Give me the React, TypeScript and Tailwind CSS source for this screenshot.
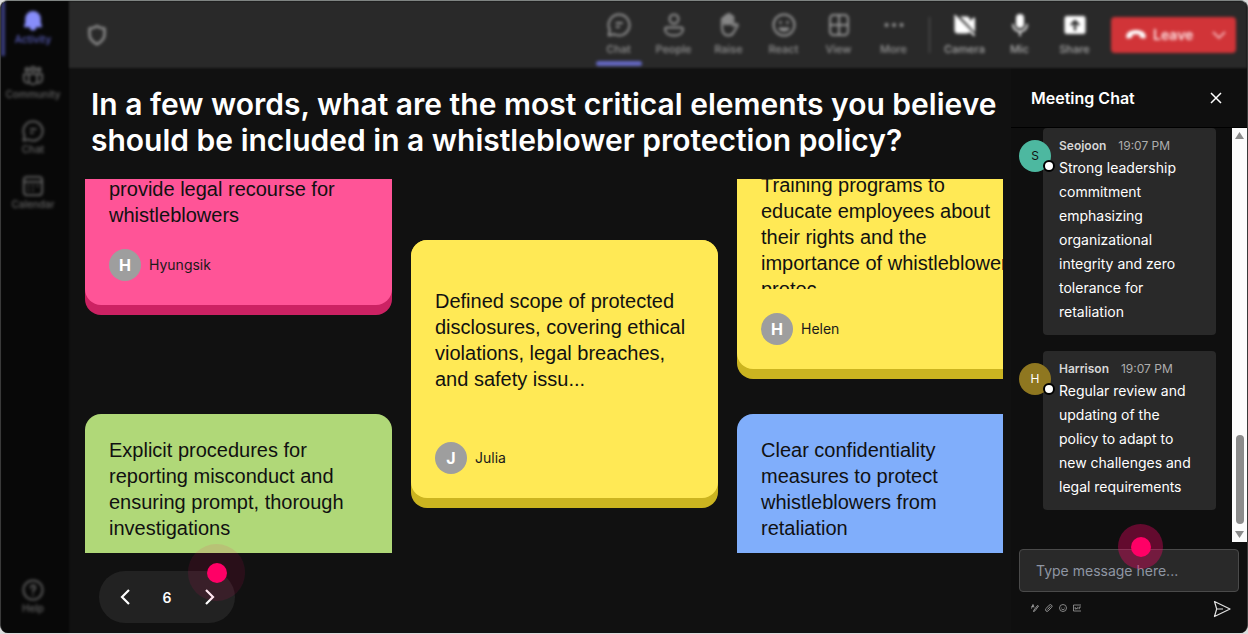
import { useState } from "react";
import type { ReactNode } from "react";

const cardText = "font-['Liberation_Sans',Arial,sans-serif] text-[20px] leading-[26px] text-[#111111]";

function Icon({ children, size = 24 }: { children: ReactNode; size?: number }) {
  return (
    <svg width={size} height={size} viewBox="0 0 24 24" fill="none" stroke="currentColor" strokeWidth="2" strokeLinecap="round" strokeLinejoin="round" aria-hidden="true">
      {children}
    </svg>
  );
}

const icons = {
  bell: <path d="M12 1a8.500 8.500 0 0 0-8.500 8.500v4.500l-1.300 3.400c-.3.7.1 1.400.9 1.400H8.500a3.500 3.500 0 0 0 7 0h5.400c.8 0 1.200-.7.9-1.400L20.500 14V9.500A8.500 8.500 0 0 0 12 1Z" fill="currentColor" stroke="none" />,
  community: (
    <>
      <circle cx="12" cy="4.500" r="2.300" />
      <circle cx="5.500" cy="5" r="1.800" />
      <circle cx="18.500" cy="5" r="1.800" />
      <path d="M7.500 10h9v6.500a4.500 4.500 0 0 1-9 0ZM7 10H2v5.500a4 4 0 0 0 5.500 3.700M17 10h5v5.500a4 4 0 0 1-5.500 3.700" />
    </>
  ),
  chat: <path d="M12 1.500a10.500 10.500 0 1 1-5 19.700L1.600 22.400l1.200-5.400A10.500 10.500 0 0 1 12 1.500ZM9.500 10h5.500M9.500 14h2.500" />,
  calendar: (
    <>
      <rect x="2" y="2" width="20" height="20" rx="3.500" />
      <path d="M2 7.500h20M7 12h.1M12 12h.1M17 12h.1M7 16.500h.1M12 16.500h.1" />
    </>
  ),
  help: (
    <>
      <circle cx="12" cy="12" r="10.500" />
      <path d="M9.500 9.500a2.500 2.500 0 1 1 3.800 2.100c-.9.600-1.300 1.100-1.300 2.100M12 17v.1" />
    </>
  ),
  people: (
    <>
      <circle cx="12" cy="6" r="4.500" />
      <path d="M4.800 14.500h14.400a1.800 1.800 0 0 1 1.800 1.800c0 3.900-3.800 6.200-9 6.200s-9-2.300-9-6.200a1.800 1.800 0 0 1 1.800-1.800Z" />
    </>
  ),
  raise: (
    <>
      <path d="M5 14V6.500a1.400 1.400 0 0 1 2.800 0V4a1.400 1.400 0 0 1 2.800 0V2.500a1.400 1.400 0 0 1 2.800 0v2a1.400 1.400 0 0 1 2.800 0v8.500l2.300-1.700c1.200-.8 2.700.4 2 1.600L16.500 19.500c-1 2-2.700 3-5 3C7.500 22.500 5 20 5 14Z" />
      <path d="M7.800 6v5M10.600 4v7M13.400 5v6" strokeWidth="2.500" />
    </>
  ),
  react: (
    <>
      <circle cx="12" cy="12" r="10.500" />
      <path d="M7.500 15.500c2.200 2.600 6.800 2.600 9 0Z" />
      <path d="M8.500 9.500v.1M15.500 9.500v.1" strokeWidth="2.800" />
    </>
  ),
  view: (
    <>
      <rect x="3" y="2" width="18" height="20" rx="3.500" />
      <path d="M12 2v20M3 12h18" />
    </>
  ),
  more: <path d="M4.500 12h.1M12 12h.1M19.500 12h.1" strokeWidth="4" />,
  camera: (
    <>
      <path d="M3 4.500h10.500a2.500 2.500 0 0 1 2.500 2.500v10a2.500 2.500 0 0 1-2.500 2.500H5A2.500 2.500 0 0 1 2.500 17V5M16.500 10.500 21 5.500v13l-4.500-4Z" fill="currentColor" />
      <path d="m3.500 1.500 19 20" stroke="#292929" strokeWidth="2.500" />
      <path d="m2 3 19 19" />
    </>
  ),
  mic: (
    <>
      <rect x="8" y="1" width="8" height="14" rx="4" fill="currentColor" stroke="none" />
      <path d="M5 11.500a7 7 0 0 0 14 0M12 18.500v4" strokeWidth="1.700" />
    </>
  ),
  share: (
    <>
      <rect x="1.500" y="3" width="21" height="18" rx="2.500" fill="currentColor" stroke="none" />
      <path d="M12 16.500v-8M8.500 11.500 12 8l3.500 3.500" stroke="#292929" strokeWidth="2.400" />
    </>
  ),
};

const navItems = [
  { label: "Activity", icon: icons.bell },
  { label: "Community", icon: icons.community },
  { label: "Chat", icon: icons.chat },
  { label: "Calendar", icon: icons.calendar },
];

const tools = [
  { label: "Chat", icon: icons.chat },
  { label: "People", icon: icons.people },
  { label: "Raise", icon: icons.raise },
  { label: "React", icon: icons.react },
  { label: "View", icon: icons.view },
  { label: "More", icon: icons.more },
];

const devices = [
  { label: "Camera", icon: icons.camera },
  { label: "Mic", icon: icons.mic },
  { label: "Share", icon: icons.share },
];

const messages = [
  { name: "Seojoon", time: "19:07 PM", text: "Strong leadership commitment emphasizing organizational integrity and zero tolerance for retaliation", avatar: "bg-[#4db8a0] text-[#111111]" },
  { name: "Harrison", time: "19:07 PM", text: "Regular review and updating of the policy to adapt to new challenges and legal requirements", avatar: "bg-[#8f7720] text-white" },
];

function Sidebar() {
  return (
    <nav className="flex w-[68px] shrink-0 flex-col justify-between bg-[#080808] pr-1 pb-[18px] text-[#666666] blur-[1px]">
      <div className="flex flex-col blur-[1px]">
        {navItems.map((item, i) => (
          <button key={item.label} className={`flex h-[55px] flex-col items-center pt-[9px] ${i === 0 ? "border-l-4 border-[#3b3e80] pr-1 text-[#878dfa]" : ""}`}>
            <Icon size={22}>{item.icon}</Icon>
            <span className={`text-[10px] leading-[14px] font-medium ${i === 0 ? "text-[#5b60bd]" : ""}`}>{item.label}</span>
          </button>
        ))}
      </div>
      <button className="flex flex-col items-center blur-[1px]">
        <Icon size={22}>{icons.help}</Icon>
        <span className="text-[10px] leading-[14px] font-medium">Help</span>
      </button>
    </nav>
  );
}

function TopBar() {
  return (
    <header className="flex h-[67px] shrink-0 items-center justify-between bg-[#292929] pr-[11px] pl-4 blur-[1px]">
      <div className="text-[#8c8c8c] blur-[1px]">
        <Icon>
          <path d="M12 3c2 1.600 4.300 2.300 7.500 2.500v6c0 4.400-3 7.300-7.500 9.800-4.500-2.500-7.500-5.400-7.500-9.800v-6C7.700 5.300 10 4.600 12 3Z" strokeWidth="2.600" />
        </Icon>
      </div>
      <div className="flex items-center blur-[1px]">
        {tools.map((t, i) => (
          <button key={t.label} className="flex h-[67px] w-[55px] flex-col items-center pt-3 text-[#949494]">
            <Icon>{t.icon}</Icon>
            <span className="mt-[5px] text-[11px] leading-[14px] font-medium">{t.label}</span>
            {i === 0 && <span className="mt-[5px] h-[5px] w-[46px] shrink-0 rounded-sm bg-[#6468c2]" />}
          </button>
        ))}
        <span className="mr-[7px] ml-2 h-9 w-px bg-[#5c5c5c]" />
        {devices.map((t) => (
          <button key={t.label} className="flex h-[67px] w-[55px] flex-col items-center pt-3 text-white">
            <Icon>{t.icon}</Icon>
            <span className="mt-[5px] text-[11px] leading-[14px] font-medium text-[#ababab]">{t.label}</span>
          </button>
        ))}
        <button className="ml-[9px] flex h-9 w-[125px] items-center rounded-sm bg-[#d13438] pl-[14px] text-[14px] font-semibold text-[#ffe4e5]">
          <svg width="22" height="12" viewBox="0 0 22 12" fill="#ffffff" aria-hidden="true">
            <path d="M11 1C5.500 1 1.500 3.200 1.200 7c-.1 1.700.4 2.700 1.700 2.500l3-.6c1-.2 1.400-.9 1.500-1.900l.1-1.300c2.200-.7 4.800-.7 7 0l.1 1.300c.1 1 .5 1.700 1.500 1.900l3 .6c1.300.2 1.800-.8 1.700-2.500C20.500 3.200 16.500 1 11 1Z" />
          </svg>
          <span className="ml-1.5 flex-1 text-left">Leave</span>
          <svg className="mr-[9px]" width="16" height="16" viewBox="0 0 16 16" fill="none" stroke="#f5b5b8" strokeWidth="1.800" aria-hidden="true">
            <path d="m2 5 6 6 6-6" />
          </svg>
        </button>
      </div>
    </header>
  );
}

function Author({ name }: { name: string }) {
  return (
    <div className="flex items-center gap-2">
      <span className="flex size-8 items-center justify-center rounded-full bg-[#9e9e9e] text-[16px] font-bold text-white">{name[0]}</span>
      <span className="text-[14px] leading-5 text-[#1a1a1a]">{name}</span>
    </div>
  );
}

function Board() {
  return (
    <div className="ml-4 flex h-[374px] gap-[19px] overflow-hidden">
      <div className="flex w-[307px] shrink-0 flex-col justify-between">
        <article className="rounded-b-2xl bg-[#cc2263] pb-[10px]">
          <div className="flex h-[126px] flex-col justify-between rounded-b-2xl bg-[#ff5497] px-6 pb-6">
            <p className={`-mt-[3px] ${cardText}`}>provide legal recourse for whistleblowers</p>
            <Author name="Hyungsik" />
          </div>
        </article>
        <article className="h-[139px] rounded-t-2xl bg-[#b0d878] px-6 pt-[23px]">
          <p className={cardText}>Explicit procedures for reporting misconduct and ensuring prompt, thorough investigations</p>
        </article>
      </div>

      <div className="w-[307px] shrink-0 pt-[61px]">
        <article className="rounded-2xl bg-[#cbb420] pb-[10px]">
          <div className="flex h-[258px] flex-col justify-between rounded-2xl bg-[#ffe955] px-6 pt-12 pb-6">
            <p className={cardText}>Defined scope of protected disclosures, covering ethical violations, legal breaches, and safety issu...</p>
            <Author name="Julia" />
          </div>
        </article>
      </div>

      <div className="flex w-[307px] shrink-0 flex-col justify-between">
        <article className="rounded-b-2xl bg-[#cbb420] pb-[10px]">
          <div className="flex h-[190px] flex-col justify-between rounded-b-2xl bg-[#ffe955] pb-6 pl-6">
            <p className={`-mt-[7px] h-[117px] overflow-hidden ${cardText}`}>
              Training programs to
              <br />
              educate employees about
              <br />
              their rights and the
              <br />
              importance of whistleblower
              <br />
              protec...
            </p>
            <Author name="Helen" />
          </div>
        </article>
        <article className="h-[139px] rounded-t-2xl bg-[#80aefb] px-6 pt-[23px]">
          <p className={cardText}>Clear confidentiality measures to protect whistleblowers from retaliation</p>
        </article>
      </div>
    </div>
  );
}

function Pager() {
  const [page, setPage] = useState(6);
  return (
    <div className="relative mt-[18px] ml-[30px] flex h-[52px] w-[136px] items-center justify-between rounded-full bg-[#222222] px-[17px] text-white">
      <button aria-label="Previous page" onClick={() => setPage(page - 1)}>
        <svg width="18" height="18" viewBox="0 0 18 18" fill="none" stroke="currentColor" strokeWidth="2.200"><path d="M13 2 6 9l7 7" /></svg>
      </button>
      <span className="text-[14px] font-semibold">{page}</span>
      <button aria-label="Next page" onClick={() => setPage(page + 1)}>
        <svg width="18" height="18" viewBox="0 0 18 18" fill="none" stroke="currentColor" strokeWidth="2.200"><path d="m6 2 7 7-7 7" /></svg>
      </button>
      <span className="pointer-events-none absolute -top-[27px] -right-[10px] flex size-[57px] items-center justify-center rounded-full bg-[#ff0066]/10">
        <span className="size-5 rounded-full bg-[#ff0066]" />
      </span>
    </div>
  );
}

function ChatPanel() {
  const [draft, setDraft] = useState("");
  return (
    <aside className="flex w-[236px] shrink-0 flex-col bg-[#0f0f0f]">
      <div className="flex h-[60px] shrink-0 items-center justify-between border-b border-black pr-6 pl-5">
        <h2 className="text-[16px] leading-6 font-semibold text-white">Meeting Chat</h2>
        <button aria-label="Close chat" className="text-white">
          <svg width="14" height="14" viewBox="0 0 14 14" fill="none" stroke="currentColor" strokeWidth="1.500"><path d="m2 2 10 10M12 2 2 12" /></svg>
        </button>
      </div>

      <div className="flex min-h-0 flex-1">
        <ul className="flex min-w-0 flex-1 flex-col gap-4 pr-4 pl-2">
          {messages.map((m) => (
            <li key={m.name} className="flex">
              <span className={`relative mt-3 flex size-8 shrink-0 items-center justify-center rounded-full text-[12px] ${m.avatar}`}>
                {m.name[0]}
                <span className="absolute -right-[4px] bottom-0 size-3 rounded-full border-2 border-black bg-white" />
              </span>
              <div className="-ml-2 flex-1 rounded-sm bg-[#292929] px-4 pt-[8px] pb-[11px]">
                <p className="flex gap-3 text-[12px] leading-5 text-[#adadad]">
                  <span className="font-semibold text-[#d6d6d6]">{m.name}</span>
                  <span>{m.time}</span>
                </p>
                <p className="text-[14px] leading-6 text-white">{m.text}</p>
              </div>
            </li>
          ))}
        </ul>
        <div className="flex w-[15px] shrink-0 flex-col items-center justify-between bg-[#fcfcfc] py-1" aria-hidden="true">
          <svg width="9" height="8" viewBox="0 0 9 8" fill="#8b8b8b"><path d="M4.500 0 9 7H0Z" /></svg>
          <div className="flex flex-col items-center gap-1.5">
            <span className="h-[89px] w-2 rounded-full bg-[#8b8b8b]" />
            <svg width="9" height="8" viewBox="0 0 9 8" fill="#8b8b8b"><path d="M4.500 8 9 1H0Z" /></svg>
          </div>
        </div>
      </div>

      <div className="relative mt-[7px] px-2">
        <input
          aria-label="Type message"
          value={draft}
          onChange={(e) => setDraft(e.target.value)}
          placeholder="Type message here..."
          className="block h-[43px] w-full rounded-sm border border-[#4a4a4a] bg-[#292929] px-4 text-[14px] text-white outline-none placeholder:text-[#8f96a3]"
        />
        <span className="pointer-events-none absolute -top-[25px] right-[84px] flex size-[45px] items-center justify-center rounded-full bg-[#ff0066]/35">
          <span className="size-5 rounded-full bg-[#ff0066]" />
        </span>
      </div>

      <div className="flex h-[41px] shrink-0 items-start justify-between pt-2 pr-4 pl-5 text-[#a0a0a0]">
        <div className="flex gap-[6px] pt-1">
          <button aria-label="Format">
            <svg width="8" height="8" viewBox="0 0 8 8" fill="none" stroke="currentColor" strokeWidth="0.900"><path d="M.5 4.500 2 .5l1 3M.5 2.500h2M7.500 2 4 6.800 2.500 7.500 3 6 6.500 1.500Z" /></svg>
          </button>
          <button aria-label="Attach">
            <svg width="8" height="8" viewBox="0 0 8 8" fill="none" stroke="currentColor" strokeWidth="0.900"><path d="M2.500 5.500 5.500 2.300M1 4.500 4.200 1.200a1.500 1.500 0 0 1 2.400 2.200L3.200 6.900A1.500 1.500 0 0 1 1 4.700" /></svg>
          </button>
          <button aria-label="Emoji">
            <svg width="8" height="8" viewBox="0 0 8 8" fill="none" stroke="currentColor" strokeWidth="0.800"><circle cx="4" cy="4" r="3.500" /><path d="M2.300 4.700c.8 1.200 2.600 1.200 3.400 0M2.700 3v.4M5.300 3v.4" /></svg>
          </button>
          <button aria-label="GIF">
            <svg width="8" height="8" viewBox="0 0 8 8" fill="none" stroke="currentColor" strokeWidth="0.800"><path d="M8 1H.5v6H8M2.200 3v2h1.200V4M4.800 2.800v2.400M6.300 5.200V3H8" /></svg>
          </button>
        </div>
        <button aria-label="Send" className="text-[#e0e0e0]">
          <svg width="18" height="18" viewBox="0 0 18 18" fill="none" stroke="currentColor" strokeWidth="1.200" strokeLinejoin="round"><path d="m1.500 1.500 15.500 7.500-15.500 7.500 2.200-7.500ZM3.700 9H10" /></svg>
        </button>
      </div>
    </aside>
  );
}

export default function App() {
  return (
    <div className="min-h-screen bg-[#dcdcdc] pb-px font-[Inter,sans-serif]">
      <div className="flex min-h-[633px] overflow-hidden rounded-lg border-x border-t border-x-[#3a3a3a] border-t-[#7f8482] bg-[#111111]">
        <Sidebar />
        <div className="flex min-w-0 flex-1 flex-col">
          <TopBar />
          <div className="flex min-h-0 flex-1">
            <main className="min-w-0 flex-1 pr-2">
              <h1 className="pt-[18px] pb-[21px] pl-[22px] text-[30px] leading-9 font-semibold text-white">
                In a few words, what are the most critical elements you believe should be included in a whistleblower protection policy?
              </h1>
              <Board />
              <Pager />
            </main>
            <ChatPanel />
          </div>
        </div>
      </div>
    </div>
  );
}
